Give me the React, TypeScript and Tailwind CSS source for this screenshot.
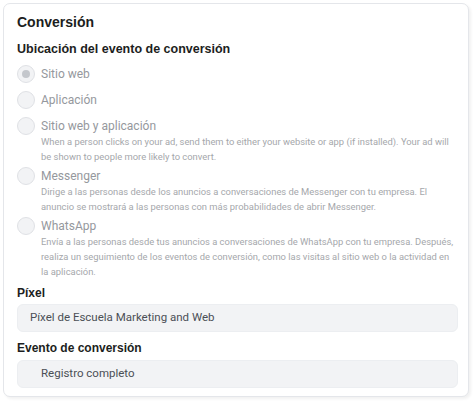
const options = [
  { label: 'Sitio web', checked: true, mt: 'mt-[8px]' },
  { label: 'Aplicación', mt: 'mt-[10px]' },
  {
    label: 'Sitio web y aplicación',
    mt: 'mt-[10px]',
    desc: 'When a person clicks on your ad, send them to either your website or app (if installed). Your ad will be shown to people more likely to convert.',
  },
  {
    label: 'Messenger',
    mt: 'mt-[4px]',
    desc: 'Dirige a las personas desde los anuncios a conversaciones de Messenger con tu empresa. El anuncio se mostrará a las personas con más probabilidades de abrir Messenger.',
  },
  {
    label: 'WhatsApp',
    mt: 'mt-[4px]',
    desc: 'Envía a las personas desde tus anuncios a conversaciones de WhatsApp con tu empresa. Después, realiza un seguimiento de los eventos de conversión, como las visitas al sitio web o la actividad en la aplicación.',
  },
];

function Radio({ checked }: { checked?: boolean }) {
  return (
    <div className="flex h-4 w-[18px] shrink-0 items-center justify-center">
      <div className="flex h-[18px] w-[18px] items-center justify-center rounded-full border border-[#dfe1e5] bg-[#f2f3f5]">
        {checked && <div className="h-[8px] w-[8px] rounded-full bg-[#c4c7cc]" />}
      </div>
    </div>
  );
}

export default function App() {
  return (
    <div className="h-[402px] w-[474px] bg-white pl-[3px] pt-[3px] font-['Roboto','Liberation_Sans',sans-serif]">
      <div className="w-[466px] rounded-[7px] border border-[#e4e6ea] bg-white pb-[8px] pl-[13px] pr-[10px] pt-[8px] shadow-[2px_2px_3px_rgba(0,0,0,0.06)]">
        {/* Header */}
        <h2 className="text-[14px] font-bold leading-[20px] text-[#1c1e21] font-['Liberation_Sans',sans-serif]">Conversión</h2>
        <h3 className="mt-[8px] text-[12.5px] font-bold leading-[18px] text-[#1c1e21] font-['Liberation_Sans',sans-serif]">
          Ubicación del evento de conversión
        </h3>

        {/* Options */}
        {options.map((o) => (
          <div key={o.label} className={`${o.mt} flex gap-[6px]`}>
            <Radio checked={o.checked} />
            <div className="min-w-0 flex-1">
              <p className="text-[12px] leading-4 text-[#95989d]">{o.label}</p>
              {o.desc && (
                <p className="pr-[2px] text-[9.4px] leading-[15px] text-[#a5a7ab]">{o.desc}</p>
              )}
            </div>
          </div>
        ))}

        {/* Pixel */}
        <h3 className="mt-[5px] text-[12px] font-bold leading-[18px] text-[#1c1e21] font-['Liberation_Sans',sans-serif]">Píxel</h3>
        <div className="mt-[2px] flex h-[28px] items-center rounded-[6px] border border-[#eceef1] bg-[#f2f3f5] pl-[12px] text-[11.5px] text-[#4b4f56]">
          Píxel de Escuela Marketing and Web
        </div>

        <h3 className="mt-[7px] text-[12px] font-bold leading-[18px] text-[#1c1e21] font-['Liberation_Sans',sans-serif]">
          Evento de conversión
        </h3>
        <div className="mt-[3px] flex h-[28px] items-center rounded-[6px] border border-[#eceef1] bg-[#f2f3f5] pl-[23px] text-[11.5px] text-[#4b4f56]">
          Registro completo
        </div>
      </div>
    </div>
  );
}
